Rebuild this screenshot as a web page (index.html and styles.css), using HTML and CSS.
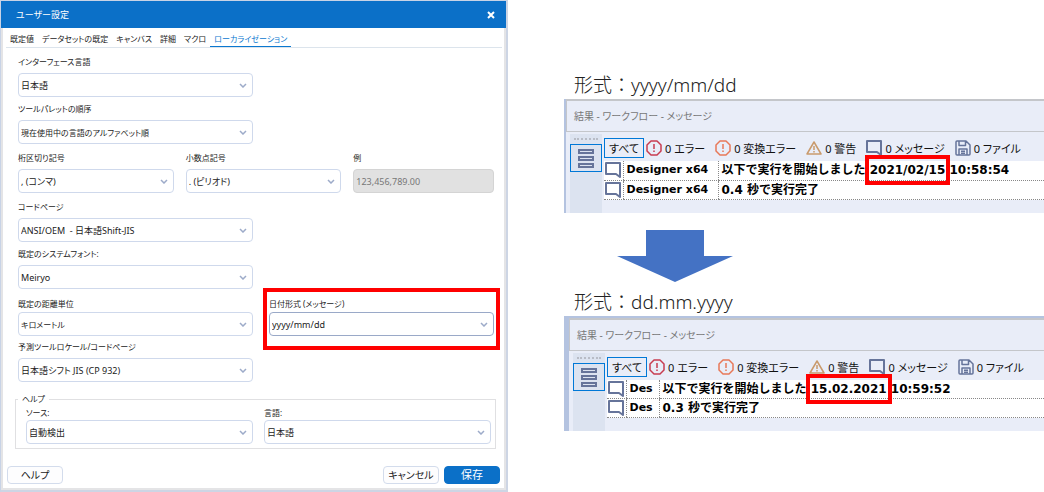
FILE: index.html
```html
<!DOCTYPE html>
<html lang="ja">
<head>
    <meta charset="UTF-8">
    <meta name="viewport" content="width=device-width, initial-scale=1.0">
    <title>ユーザー設定</title>
    <link rel="stylesheet" href="styles.css">
</head>
<body>
    <!-- Shared icons -->
    <svg class="sprite" aria-hidden="true">
        <symbol id="icon-error" viewBox="0 0 16 16">
            <path d="M5 1h6l4 4v6l-4 4H5l-4-4V5z" fill="none" stroke="currentColor" stroke-width="1.5" stroke-linejoin="round"/>
            <path d="M8 4v5M8 10.5v1.5" stroke="currentColor" stroke-width="1.5"/>
        </symbol>
        <symbol id="icon-warn" viewBox="0 0 16 16">
            <path d="M8 2l7 12H1z" fill="none" stroke="currentColor" stroke-width="1.5" stroke-linejoin="round"/>
            <path d="M8 6v4M8 11v1.5" stroke="currentColor" stroke-width="1.5"/>
        </symbol>
        <symbol id="icon-message" viewBox="0 0 16 16">
            <path d="M1 1h14v14l-4-3H1z" fill="none" stroke="currentColor" stroke-width="2" stroke-linejoin="round"/>
        </symbol>
        <symbol id="icon-file" viewBox="0 0 16 16">
            <path d="M2 1h9l4 4v9a1 1 0 0 1-1 1H2a1 1 0 0 1-1-1V2a1 1 0 0 1 1-1zM4 1v4.5h6.5V1M4 15V9h8v6M6 11.2h4M6 13.2h4" fill="none" stroke="currentColor" stroke-width="1.5" stroke-linejoin="round"/>
        </symbol>
        <symbol id="icon-list" viewBox="0 0 18 20">
            <path d="M2 2h14v3H2zM2 9h14v3H2zM2 16h14v3H2z" fill="none" stroke="currentColor" stroke-width="2"/>
        </symbol>
    </svg>

    <div class="page">
        <!-- Settings dialog -->
        <form class="dialog">
            <header class="titlebar">
                <h1>ユーザー設定</h1>
                <button type="button" class="close" aria-label="閉じる">
                    <svg viewBox="0 0 8 8"><path d="M1 1l6 6M7 1L1 7" stroke="#fff" stroke-width="2"/></svg>
                </button>
            </header>
            <nav class="tabs">
                <a href="#">既定値</a>
                <a href="#">データセットの既定</a>
                <a href="#">キャンバス</a>
                <a href="#">詳細</a>
                <a href="#">マクロ</a>
                <a href="#" class="active">ローカライゼーション</a>
            </nav>

            <div class="fields">
                <div class="row">
                    <div class="field">
                        <label for="ui-lang">インターフェース言語</label>
                        <select id="ui-lang"><option>日本語</option></select>
                    </div>
                </div>
                <div class="row">
                    <div class="field">
                        <label for="palette">ツールパレットの順序</label>
                        <select id="palette" class="kana"><option>現在使用中の言語のアルファベット順</option></select>
                    </div>
                </div>
                <div class="row three loose">
                    <div class="field">
                        <label for="thousand">桁区切り記号</label>
                        <select id="thousand"><option>, (コンマ)</option></select>
                    </div>
                    <div class="field">
                        <label for="decimal">小数点記号</label>
                        <select id="decimal"><option>. (ピリオド)</option></select>
                    </div>
                    <div class="field">
                        <label for="sample">例</label>
                        <input id="sample" type="text" value="123,456,789.00" disabled>
                    </div>
                </div>
                <div class="row loose">
                    <div class="field">
                        <label for="codepage">コードページ</label>
                        <select id="codepage"><option>ANSI/OEM &nbsp;- 日本語Shift-JIS</option></select>
                    </div>
                </div>
                <div class="row">
                    <div class="field">
                        <label for="font">既定のシステムフォント:</label>
                        <select id="font"><option>Meiryo</option></select>
                    </div>
                </div>
                <div class="row tight">
                    <div class="field">
                        <label for="distance">既定の距離単位</label>
                        <select id="distance" class="kana"><option>キロメートル</option></select>
                    </div>
                    <div class="field marked">
                        <label for="date-format">日付形式 (メッセージ)</label>
                        <select id="date-format"><option>yyyy/mm/dd</option></select>
                    </div>
                </div>
                <div class="row">
                    <div class="field">
                        <label for="predictive">予測ツールロケール/コードページ</label>
                        <select id="predictive"><option>日本語シフト JIS (CP 932)</option></select>
                    </div>
                </div>
            </div>

            <fieldset>
                <legend>ヘルプ</legend>
                <div class="field">
                    <label for="help-source">ソース:</label>
                    <select id="help-source"><option>自動検出</option></select>
                </div>
                <div class="field">
                    <label for="help-lang">言語:</label>
                    <select id="help-lang"><option>日本語</option></select>
                </div>
            </fieldset>

            <footer class="actions">
                <button type="button">ヘルプ</button>
                <button type="button" class="cancel">キャンセル</button>
                <button type="submit" class="primary">保存</button>
            </footer>
        </form>

        <!-- Message output before / after -->
        <main class="results">
            <h2>形式：yyyy/mm/dd</h2>
            <section class="panel">
                <h3>結果 - ワークフロー - メッセージ</h3>
                <div class="panel-body">
                    <aside class="rail">
                        <button type="button" aria-label="メッセージ"><svg><use href="#icon-list"/></svg></button>
                    </aside>
                    <div class="log">
                        <div class="filters">
                            <button type="button" class="all">すべて</button>
                            <button type="button"><svg class="red"><use href="#icon-error"/></svg>0 エラー</button>
                            <button type="button"><svg class="orange"><use href="#icon-error"/></svg>0 変換エラー</button>
                            <button type="button"><svg class="tan"><use href="#icon-warn"/></svg>0 警告</button>
                            <button type="button"><svg><use href="#icon-message"/></svg>0 メッセージ</button>
                            <button type="button"><svg><use href="#icon-file"/></svg>0 ファイル</button>
                        </div>
                        <table>
                            <tr>
                                <td class="icon"><svg><use href="#icon-message"/></svg></td>
                                <td class="name">Designer x64</td>
                                <td>以下で実行を開始しました <span class="date">2021/02/15</span> 10:58:54</td>
                            </tr>
                            <tr>
                                <td class="icon"><svg><use href="#icon-message"/></svg></td>
                                <td class="name">Designer x64</td>
                                <td>0.4 秒で実行完了</td>
                            </tr>
                        </table>
                    </div>
                </div>
            </section>

            <svg class="arrow" viewBox="0 0 116 52"><path d="M29 0h58v26h29L58 52 0 26h29z" fill="#4472c4"/></svg>

            <h2>形式：dd.mm.yyyy</h2>
            <section class="panel framed">
                <h3>結果 - ワークフロー - メッセージ</h3>
                <div class="panel-body">
                    <aside class="rail">
                        <button type="button" aria-label="メッセージ"><svg><use href="#icon-list"/></svg></button>
                    </aside>
                    <div class="log">
                        <div class="filters">
                            <button type="button" class="all">すべて</button>
                            <button type="button"><svg class="red"><use href="#icon-error"/></svg>0 エラー</button>
                            <button type="button"><svg class="orange"><use href="#icon-error"/></svg>0 変換エラー</button>
                            <button type="button"><svg class="tan"><use href="#icon-warn"/></svg>0 警告</button>
                            <button type="button"><svg><use href="#icon-message"/></svg>0 メッセージ</button>
                            <button type="button"><svg><use href="#icon-file"/></svg>0 ファイル</button>
                        </div>
                        <table>
                            <tr>
                                <td class="icon"><svg><use href="#icon-message"/></svg></td>
                                <td class="name short">Des</td>
                                <td>以下で実行を開始しました <span class="date">15.02.2021</span> 10:59:52</td>
                            </tr>
                            <tr>
                                <td class="icon"><svg><use href="#icon-message"/></svg></td>
                                <td class="name short">Des</td>
                                <td>0.3 秒で実行完了</td>
                            </tr>
                        </table>
                    </div>
                </div>
            </section>
        </main>
    </div>
</body>
</html>
```
FILE: styles.css
```css
* {
    box-sizing: border-box;
}
body {
    margin: 0;
    background: #fff;
    color: #222;
    font-family: "Noto Sans", "Noto Sans CJK JP", sans-serif;
    font-size: 9px;
    font-feature-settings: "palt";
}
h1, h2, h3 {
    margin: 0;
    font-weight: normal;
}
button, select, input {
    font: inherit;
    font-feature-settings: inherit;
    color: inherit;
    margin: 0;
}
.sprite {
    position: absolute;
    width: 0;
    height: 0;
}
.page {
    display: grid;
    grid-template-columns: 508fr 480fr;
    column-gap: 56px;
    align-items: start;
}

/* Dialog */
.dialog {
    border: 1px solid #c8d3e6;
    border-right: 2px solid #cdd5e4;
    border-bottom: 2px solid #cdd5e4;
    box-shadow: inset 2px 0 #e4e4e6, inset -2px -2px #e4e4e6;
    padding-bottom: 6px;
}
.titlebar {
    display: flex;
    align-items: center;
    justify-content: space-between;
    height: 27px;
    padding: 0 11px 0 15px;
    background: #0b70c8;
    color: #fff;
}
.titlebar h1 {
    font-size: 9px;
}
.close {
    padding: 0;
    border: 0;
    background: none;
    display: flex;
}
.close svg {
    width: 8px;
    height: 8px;
}
.tabs {
    display: flex;
    gap: 8px;
    margin: 0 4px 0 5px;
    padding: 0 4px;
    border-bottom: 1px solid #dce4ec;
    font-size: 8px;
}
.tabs a {
    line-height: 17px;
    padding-top: 2px;
    color: inherit;
    text-decoration: none;
    white-space: nowrap;
}
.tabs .active {
    margin: 0 -4px;
    padding: 2px 4px 0;
    color: #0b78d0;
    box-shadow: inset 0 -1px #0b78d0;
}
.fields {
    padding: 7px 12px 0 17px;
}
.row {
    display: grid;
    grid-template-columns: 235fr 225fr;
    column-gap: 16px;
    margin-bottom: 5px;
}
.row.three {
    grid-template-columns: 156fr 156fr 141fr;
    column-gap: 12px;
}
.row.loose {
    margin-top: 7px;
}
.row.tight {
    margin: 8px 0 4px;
}
.field {
    display: flex;
    flex-direction: column;
    gap: 4px;
    min-width: 0;
}
.tight .field {
    gap: 1px;
}
.field label {
    font-size: 8px;
    line-height: 14px;
    white-space: nowrap;
}
select, input {
    width: 100%;
    height: 24px;
    padding: 0 16px 0 2px;
    border: 1px solid #cfd9ec;
    border-radius: 4px;
    appearance: none;
    background: #fff url("data:image/svg+xml,%3Csvg xmlns='http://www.w3.org/2000/svg' viewBox='0 0 8 5'%3E%3Cpath d='M1 1l3 3 3-3' fill='none' stroke='%239dabc9' stroke-width='1.5'/%3E%3C/svg%3E") no-repeat right 5px center / 8px 5px;
}
.kana {
    font-size: 8px;
}
input:disabled {
    background: #e1e1e1;
    border-color: #d4d4d4;
    color: #777;
}
.marked {
    position: relative;
}
.marked select {
    border-color: #9aa9c8;
}
.marked::after {
    content: "";
    position: absolute;
    inset: -9px -6px -14px -6px;
    border: 4px solid #f00;
    pointer-events: none;
}
fieldset {
    display: grid;
    grid-template-columns: 1fr 1fr;
    column-gap: 11px;
    margin: 10px 10px 0 14px;
    padding: 0 4px 4px 10px;
    border: 1px solid #e0e0e2;
}
legend {
    padding: 0 4px;
    margin-left: -8px;
    font-size: 8px;
    line-height: 14px;
}
fieldset .field {
    gap: 0;
}
.actions {
    display: flex;
    gap: 5px;
    margin: 17px 6px 0;
}
.actions button {
    width: 56px;
    height: 18px;
    padding: 0;
    border: 1px solid #d3dcec;
    border-radius: 4px;
    background: #fdfdfe;
    font-size: 10px;
    line-height: 16px;
}
.actions .cancel {
    margin-left: auto;
}
.actions .primary {
    border-color: #0b70c8;
    background: #0b70c8;
    color: #fff;
    font-size: 11px;
}

/* Results */
.results {
    min-width: 0;
    padding-top: 71px;
    overflow: hidden;
}
.results h2 {
    padding-left: 10px;
    font-size: 19px;
    font-weight: 300;
    font-feature-settings: normal;
    line-height: 28px;
}
.panel {
    border-left: 2px solid #b4c3e0;
    background: #e9edf8;
    color: #111;
}
.panel h3 {
    padding-left: 7px;
    border: 1px solid #c4c6ca;
    border-width: 2px 0 1px 1px;
    color: #777;
    font-size: 10px;
    line-height: 30px;
}
.panel-body {
    display: flex;
    gap: 2px;
    padding: 2px 0 0 4px;
}
.rail {
    flex: none;
    width: 32px;
    background: #dce3f0;
}
.rail::before {
    content: "";
    display: block;
    margin: 4px 4px;
    border-top: 2px dotted #b8bcc6;
}
.rail button {
    display: flex;
    align-items: center;
    justify-content: center;
    width: 32px;
    height: 28px;
    padding: 0;
    border: 1px solid #0078d7;
    background: #dce3f0;
    color: #66749a;
}
.rail svg {
    width: 18px;
    height: 20px;
}
.log {
    flex: 1;
    min-width: 0;
    padding-bottom: 13px;
}
.filters {
    display: flex;
    gap: 10px;
    height: 27px;
    padding-top: 4px;
}
.filters button {
    display: flex;
    align-items: center;
    gap: 3px;
    height: 20px;
    padding: 0;
    border: 0;
    background: none;
    font-size: 11px;
    white-space: nowrap;
}
.filters .all {
    margin-right: -8px;
    padding: 0 4px;
    border: 1px solid #0078d7;
}
.filters svg, .icon svg {
    width: 16px;
    height: 16px;
    color: #66749a;
}
.filters .red {
    color: #c83c50;
}
.filters .orange {
    color: #e87858;
}
.filters .tan {
    color: #c99a6c;
}
table {
    width: 100%;
    border-collapse: collapse;
    background: #fff;
    color: #000;
    font-family: "DejaVu Sans", "Noto Sans CJK JP", sans-serif;
    font-feature-settings: normal;
    font-size: 12px;
    font-weight: bold;
}
td {
    height: 19px;
    padding: 0 0 0 3px;
    border-bottom: 1px dotted #888;
    line-height: 18px;
    white-space: nowrap;
}
td + td {
    border-left: 1px dotted #888;
}
td.icon {
    width: 19px;
    padding: 0 0 0 1px;
}
.icon svg {
    display: block;
}
.name {
    width: 95px;
    font-size: 11px;
}
.name.short {
    width: 33px;
}
.date {
    position: relative;
}
.date::after {
    content: "";
    position: absolute;
    inset: -8px -5px;
    border: 4px solid #f00;
}
.arrow {
    display: block;
    width: 116px;
    height: 52px;
    margin: 17px 0 6px 53px;
}
.framed {
    border-top: 2px solid #b4c3e0;
    border-left-width: 5px;
}
```
